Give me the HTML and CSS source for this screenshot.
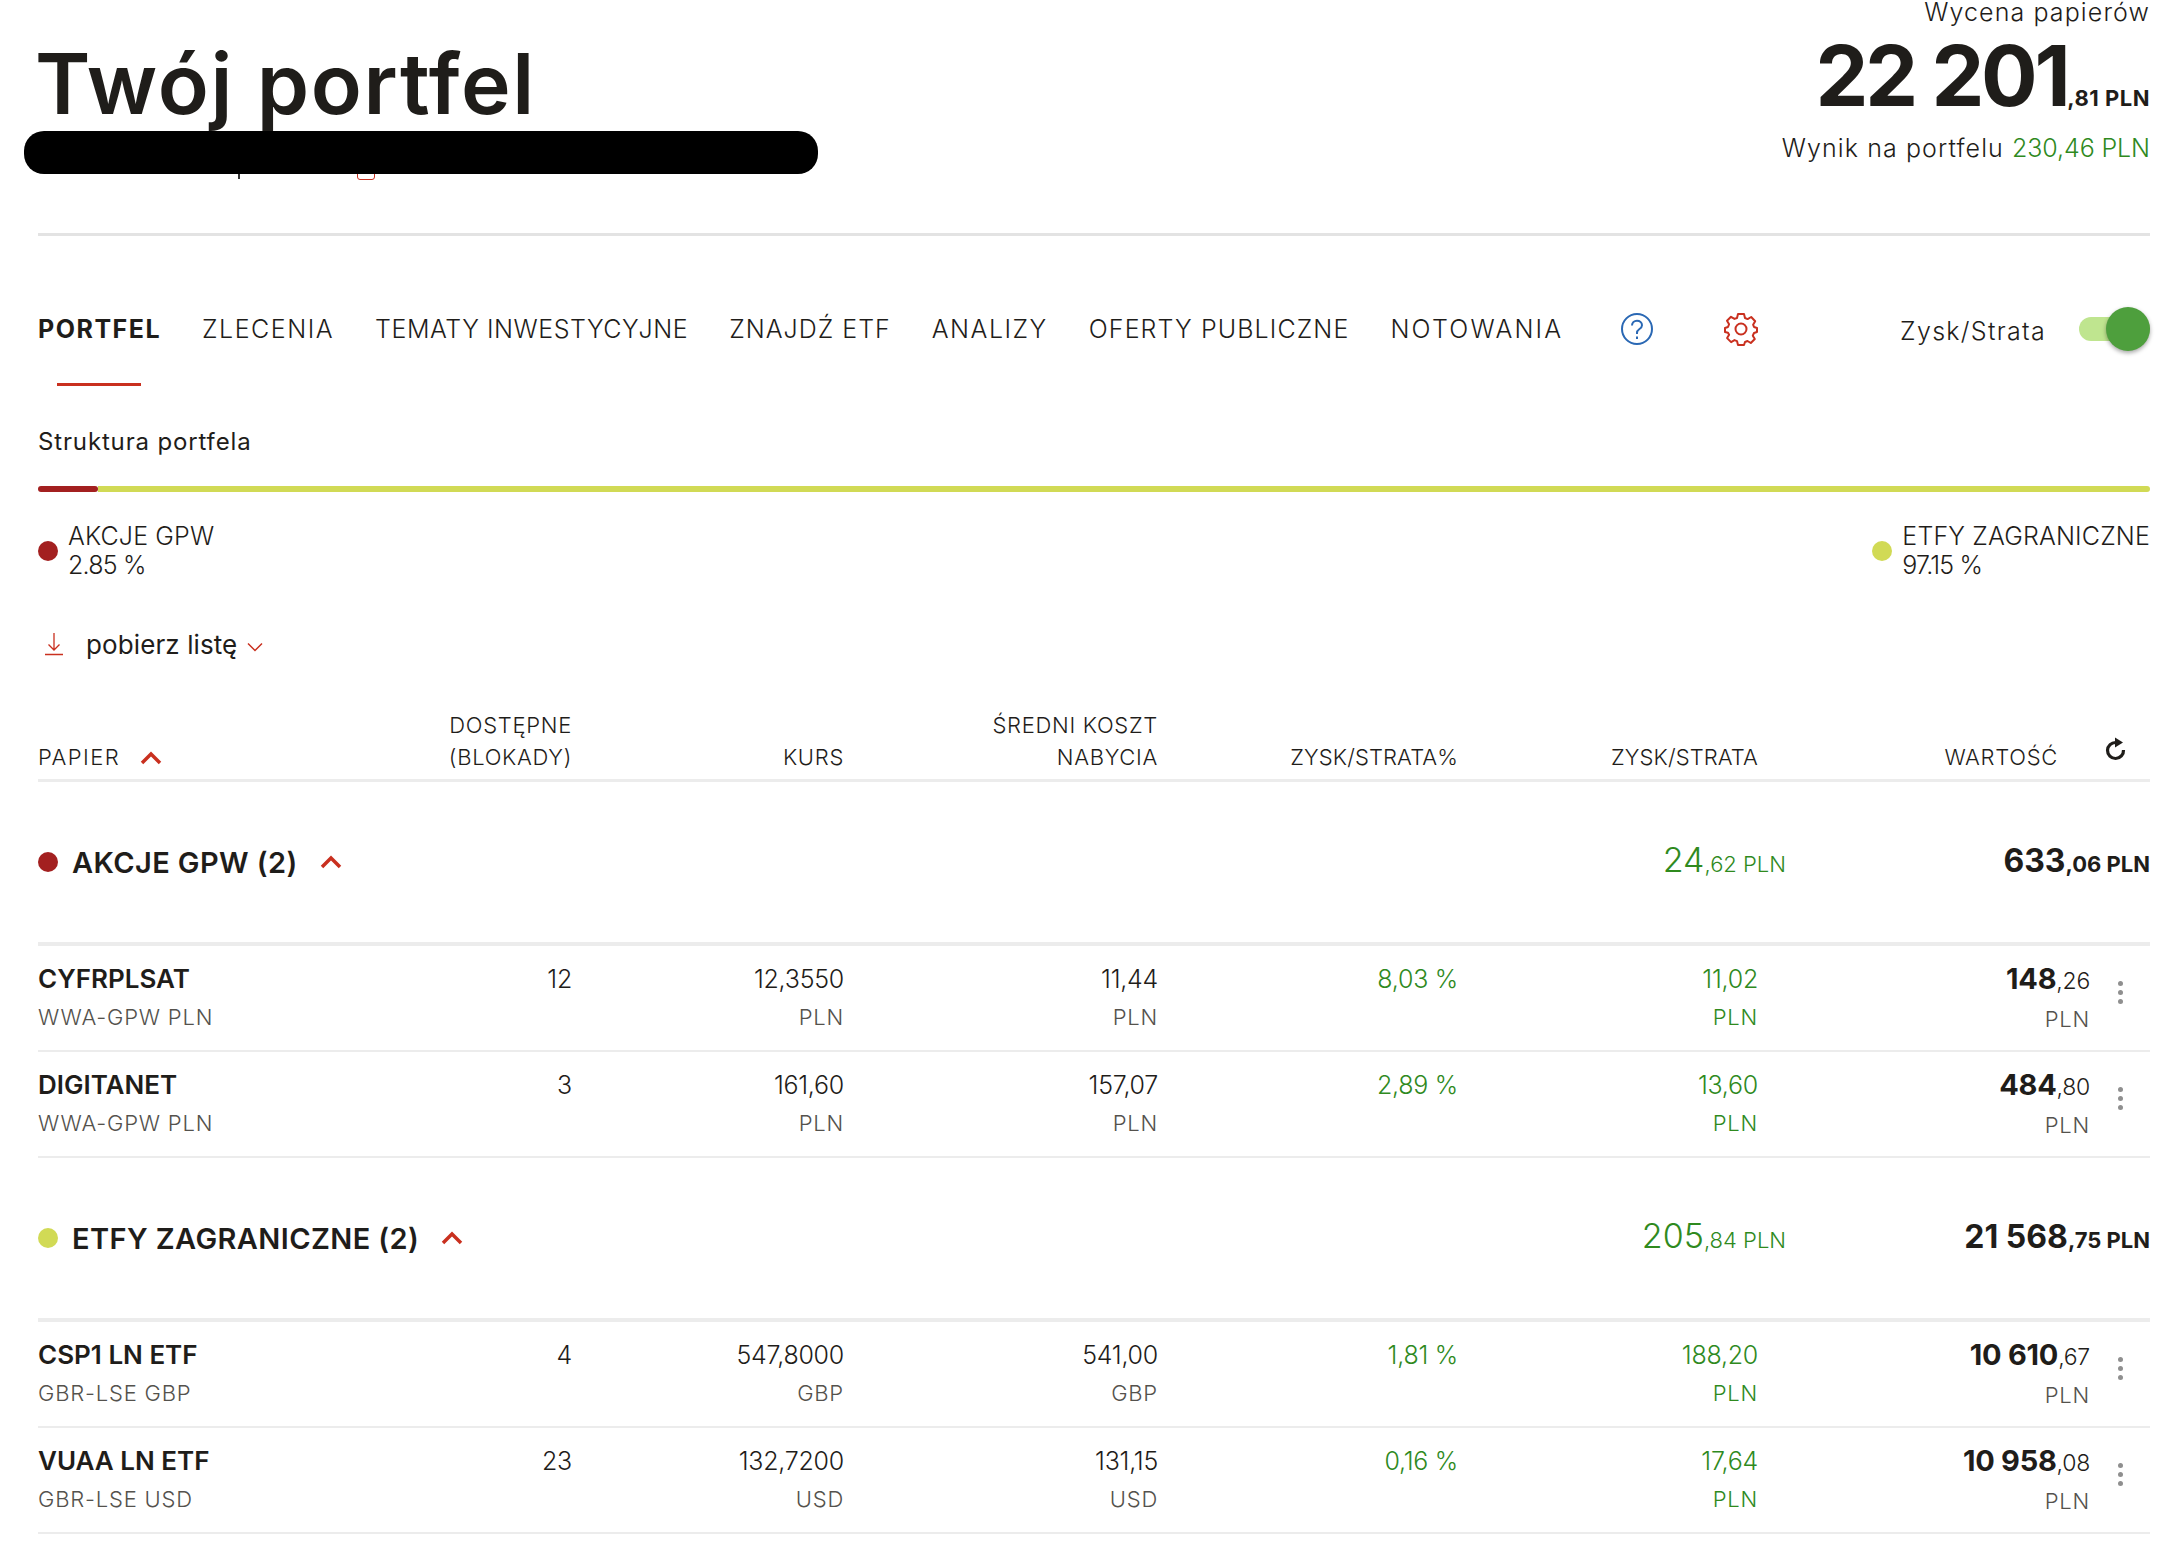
FILE: index.html
```html
<!DOCTYPE html>
<html lang="pl">
  <head>
    <meta charset="UTF-8" />
    <title>Twój portfel</title>
    <link rel="stylesheet" href="styles.css">
  </head>
  <body>
    <header class="top">
      <div class="top-left">
        <h1>Twój portfel</h1>
      </div>
      <div class="top-right">
        <div class="top-label">Wycena papierów</div>
        <div class="top-sum">22 201<small>,81 PLN</small></div>
        <div class="top-result">Wynik na portfelu <span class="green">230,46 PLN</span></div>
      </div>
      <!-- zamazany fragment -->
      <i class="bit-line"></i>
      <i class="bit-icon"></i>
      <div class="redacted"></div>
    </header>

    <nav class="tabs">
      <a class="tab active">PORTFEL</a>
      <a class="tab tab-orders">ZLECENIA</a>
      <a class="tab tab-themes">TEMATY INWESTYCYJNE</a>
      <a class="tab tab-etf">ZNAJDŹ ETF</a>
      <a class="tab tab-an">ANALIZY</a>
      <a class="tab tab-ipo">OFERTY PUBLICZNE</a>
      <a class="tab tab-quotes">NOTOWANIA</a>
      <svg class="ico-help" width="34" height="34" viewBox="0 0 34 34" fill="none" stroke="#2a68b4" stroke-width="2">
        <circle cx="17" cy="17" r="15"/>
        <path d="M12 13.5c0-3 2.300-4.800 5-4.800s5 1.800 5 4.500c0 2-1.200 3-2.800 4.100-1.500 1-2.200 1.900-2.200 3.700v1"/>
        <path d="M17 24.500v2.500"/>
      </svg>
      <svg class="ico-gear" width="34" height="34" viewBox="0 0 34 34" fill="none" stroke="#c9301f" stroke-width="2" stroke-linejoin="round">
        <circle cx="17" cy="17" r="5.500"/>
        <path d="M14 2h6l1 4 2.600 1.100 3.600-2.100 4 4.200-2.100 3.500L30 15l3 1v4l-3 1-1.200 2.700 2 3.300-4 4-3.300-2-2.500 1L20 33h-6l-1-3.900-2.500-1-3.400 2-4-4 2-3.400L4 20.700 1 20v-4l3-1 1.100-2.800L3 8.700l4-3.900 3.500 2.100L13 6z"/>
      </svg>
      <span class="switch-label">Zysk/Strata</span>
      <span class="switch"><span class="knob"></span></span>
    </nav>

    <section class="structure">
      <div class="structure-title">Struktura portfela</div>
      <div class="bar">
        <div class="bar-red"></div>
        <div class="bar-lime"></div>
      </div>
      <div class="legend">
        <div class="legend-item">
          <span class="dot dot-red"></span>
          <div>AKCJE GPW<br><span class="pct">2.85 %</span></div>
        </div>
        <div class="legend-item">
          <span class="dot dot-lime"></span>
          <div>ETFY ZAGRANICZNE<br><span class="pct">97.15 %</span></div>
        </div>
      </div>
    </section>

    <div class="download">
      <svg width="20" height="24" viewBox="0 0 20 24" fill="none" stroke="#c9301f" stroke-width="1.300">
        <path d="M10 1v17M4.500 12.500 10 18l5.500-5.500M1 22.500h18"/>
      </svg>
      <span>pobierz listę</span>
      <svg class="chev-down" width="16" height="10" viewBox="0 0 16 10" fill="none" stroke="#c9301f" stroke-width="1.500">
        <path d="M1 1.500 8 8.500l7-7"/>
      </svg>
    </div>

    <div class="grid head">
      <div class="cell-left head-first">PAPIER
        <svg class="chev-up" width="22" height="14" viewBox="0 0 22 14" fill="none" stroke="#c9301f" stroke-width="3.500">
          <path d="M2 12 11 3l9 9"/>
        </svg>
      </div>
      <div>DOSTĘPNE<br>(BLOKADY)</div>
      <div>KURS</div>
      <div>ŚREDNI KOSZT<br>NABYCIA</div>
      <div class="head-tight">ZYSK/STRATA%</div>
      <div class="head-tight">ZYSK/STRATA</div>
      <div class="head-value">WARTOŚĆ</div>
      <svg class="ico-refresh" width="24" height="24" viewBox="0 0 24 24" fill="none" stroke="#1f1d1a" stroke-width="3.200">
        <path d="M13 5.500a8 8 0 1 0 7.500 7.500"/>
        <path d="M12 0.500l8 5-8 5z" fill="#1f1d1a" stroke="none"/>
      </svg>
    </div>

    <div class="group">
      <div class="group-name">
        <span class="dot dot-red"></span>AKCJE GPW (2)
        <svg class="chev-up" width="22" height="14" viewBox="0 0 22 14" fill="none" stroke="#c9301f" stroke-width="3.500">
          <path d="M2 12 11 3l9 9"/>
        </svg>
      </div>
      <div class="group-gain green">24<small>,62 PLN</small></div>
      <div class="group-value">633<small>,06 PLN</small></div>
    </div>
    <div class="grid row">
      <div class="cell-left"><b>CYFRPLSAT</b><em>WWA-GPW PLN</em></div>
      <div>12</div>
      <div>12,3550<em>PLN</em></div>
      <div>11,44<em>PLN</em></div>
      <div class="green">8,03 %</div>
      <div class="green">11,02<em>PLN</em></div>
      <div><span class="val"><b>148</b>,26</span><em>PLN</em></div>
      <div class="more"><i></i><i></i><i></i></div>
    </div>
    <div class="grid row">
      <div class="cell-left"><b>DIGITANET</b><em>WWA-GPW PLN</em></div>
      <div>3</div>
      <div>161,60<em>PLN</em></div>
      <div>157,07<em>PLN</em></div>
      <div class="green">2,89 %</div>
      <div class="green">13,60<em>PLN</em></div>
      <div><span class="val"><b>484</b>,80</span><em>PLN</em></div>
      <div class="more"><i></i><i></i><i></i></div>
    </div>

    <div class="group">
      <div class="group-name">
        <span class="dot dot-lime"></span>ETFY ZAGRANICZNE (2)
        <svg class="chev-up" width="22" height="14" viewBox="0 0 22 14" fill="none" stroke="#c9301f" stroke-width="3.500">
          <path d="M2 12 11 3l9 9"/>
        </svg>
      </div>
      <div class="group-gain green">205<small>,84 PLN</small></div>
      <div class="group-value">21 568<small>,75 PLN</small></div>
    </div>
    <div class="grid row">
      <div class="cell-left"><b>CSP1 LN ETF</b><em>GBR-LSE GBP</em></div>
      <div>4</div>
      <div>547,8000<em>GBP</em></div>
      <div>541,00<em>GBP</em></div>
      <div class="green">1,81 %</div>
      <div class="green">188,20<em>PLN</em></div>
      <div><span class="val"><b>10 610</b>,67</span><em>PLN</em></div>
      <div class="more"><i></i><i></i><i></i></div>
    </div>
    <div class="grid row">
      <div class="cell-left"><b>VUAA LN ETF</b><em>GBR-LSE USD</em></div>
      <div>23</div>
      <div>132,7200<em>USD</em></div>
      <div>131,15<em>USD</em></div>
      <div class="green">0,16 %</div>
      <div class="green">17,64<em>PLN</em></div>
      <div><span class="val"><b>10 958</b>,08</span><em>PLN</em></div>
      <div class="more"><i></i><i></i><i></i></div>
    </div>
  </body>
</html>
```

FILE: styles.css
```css
html {
  margin: 0;
  padding: 0;
}

body {
  margin: 0;
  padding: 0 34px 30px 38px;
  background: white;
  color: #1f1d1a;
  font-family: "Inter", "Liberation Sans", sans-serif;
  font-weight: 300;
  font-size: 24px;
}

.green {
  color: #2f8a1e;
}

/* top */
.top {
  display: flex;
  justify-content: space-between;
  height: 233px;
  border-bottom: 3px solid #e3e3e3;
  position: relative;
}

h1 {
  margin: 36px 0 0 -3px;
  font-size: 84px;
  line-height: 96px;
  font-weight: 600;
  letter-spacing: 1.6px;
}

.top-right {
  text-align: right;
}

.top-label {
  font-size: 25px;
  line-height: 24px;
  letter-spacing: 1.1px;
}

.top-sum {
  margin-top: 18px;
  font-size: 84px;
  line-height: 68px;
  font-weight: 700;
  letter-spacing: -3.3px;
}

.top-sum small {
  font-size: 22px;
  letter-spacing: 0.5px;
}

.top-result {
  margin-top: 1px;
  line-height: 30px;
  font-size: 25px;
  letter-spacing: 1.1px;
}

.top-result .green {
  letter-spacing: -0.1px;
}

.redacted {
  position: absolute;
  left: -14px;
  top: 131px;
  width: 794px;
  height: 43px;
  background: black;
  border-radius: 20px;
}

.bit-line {
  position: absolute;
  left: 200px;
  top: 170px;
  width: 2px;
  height: 9px;
  background: #333;
}

.bit-icon {
  position: absolute;
  left: 319px;
  top: 165px;
  width: 16px;
  height: 13px;
  border: 1.500px solid #c9301f;
  border-radius: 3px;
}

/* tabs */
.tabs {
  display: flex;
  align-items: center;
  height: 94px;
  margin-top: 46px;
  position: relative;
  font-size: 25px;
  letter-spacing: 0.5px;
}

.tab {
  white-space: nowrap;
  margin-right: 41px;
}

.tab.active {
  font-weight: 700;
  letter-spacing: 1.5px;
  position: relative;
}

.tab.active::after {
  content: "";
  position: absolute;
  left: 19px;
  width: 84px;
  top: 69px;
  height: 3px;
  background: #c9301f;
}

.tab-orders {
  letter-spacing: 1.5px;
}

.tab-themes {
  letter-spacing: 0.55px;
}

.tab-etf {
  letter-spacing: 1px;
}

.tab-an {
  letter-spacing: 1.5px;
}

.tab-ipo {
  letter-spacing: 1.1px;
}

.tab-quotes {
  letter-spacing: 2.2px;
}

.ico-help {
  margin-left: 16px;
}

.ico-gear {
  margin-left: 70px;
}

.switch-label {
  margin-left: auto;
  margin-right: 33px;
  padding-top: 3px;
  letter-spacing: 1.3px;
}

.switch {
  display: block;
  width: 71px;
  height: 24px;
  border-radius: 12px;
  background: #bfe58f;
  position: relative;
}

.knob {
  position: absolute;
  right: 0;
  top: -10px;
  width: 44px;
  height: 44px;
  border-radius: 50%;
  background: #4e9f3d;
  box-shadow: 0 2px 4px rgba(0, 0, 0, 0.35);
}

/* struktura */
.structure {
  margin-top: 51px;
}

.structure-title {
  line-height: 30px;
  font-weight: 400;
  letter-spacing: 0.85px;
}

.bar {
  display: flex;
  height: 6px;
  margin-top: 29px;
}

.bar-red {
  width: 60px;
  background: #a32020;
  border-radius: 3px;
}

.bar-lime {
  flex: 1;
  background: #d1da55;
  border-radius: 0 3px 3px 0;
}

.legend {
  display: flex;
  justify-content: space-between;
  margin-top: 30px;
  line-height: 29px;
  font-size: 25px;
  letter-spacing: 0.15px;
}

.legend-item {
  display: flex;
  align-items: center;
  gap: 10px;
}

.pct {
  letter-spacing: -0.8px;
}

.dot {
  display: inline-block;
  width: 20px;
  height: 20px;
  border-radius: 50%;
  flex-shrink: 0;
}

.dot-red {
  background: #a32020;
}

.dot-lime {
  background: #d1da55;
}

/* pobierz */
.download {
  display: flex;
  align-items: center;
  margin-top: 47px;
  padding-left: 6px;
  height: 34px;
  font-size: 26px;
  font-weight: 400;
  letter-spacing: 0.1px;
}

.download span {
  margin-left: 22px;
}

.chev-down {
  margin-left: 10px;
  margin-top: 5px;
}

/* tabela */
.grid {
  display: grid;
  grid-template-columns: 267px 267px 272px 314px 300px 300px 332px 60px;
  text-align: right;
}

.cell-left {
  text-align: left;
}

.head {
  align-items: end;
  margin-top: 48px;
  padding-bottom: 6px;
  border-bottom: 3px solid #ececec;
  font-size: 22px;
  line-height: 32px;
  letter-spacing: 0.7px;
}

.head-first {
  letter-spacing: 1.4px;
}

.head-first .chev-up {
  margin-left: 12px;
}

.head-tight {
  letter-spacing: 0.1px;
}

.head-value {
  padding-right: 32px;
}

.chev-up {
  margin-left: 16px;
}

.ico-refresh {
  justify-self: end;
  margin-right: 23px;
  margin-bottom: 12px;
}

.group {
  display: grid;
  grid-template-columns: 1720px 392px;
  align-items: center;
  height: 160px;
  position: relative;
  border-bottom: 4px solid #ececec;
}

.group-name {
  display: flex;
  align-items: center;
  font-size: 29px;
  font-weight: 600;
  letter-spacing: 0.4px;
}

.group-name .dot {
  margin-right: 14px;
}

.group-name .chev-up {
  margin-left: 22px;
}

.group-gain {
  position: absolute;
  right: 364px;
  margin-top: -5px;
  font-size: 34px;
  font-weight: 300;
}

.group-gain small {
  font-size: 22px;
}

.group-value {
  grid-column: 2;
  text-align: right;
  margin-top: -4px;
  font-size: 32px;
  font-weight: 700;
}

.group-value small {
  font-size: 22px;
}

.row {
  height: 104px;
  border-bottom: 2px solid #ececec;
  font-size: 25px;
  line-height: 34px;
  letter-spacing: -0.25px;
  align-content: start;
}

.row > div {
  padding-top: 16px;
}

.row b {
  font-weight: 700;
}

.row .val b {
  font-size: 29px;
}

.row .val {
  font-size: 23px;
}

.row em {
  display: block;
  font-style: normal;
  font-size: 22px;
  line-height: 28px;
  margin-top: 7px;
  letter-spacing: 0.8px;
  color: #54524d;
}

.row .green em {
  color: #2f8a1e;
}

.cell-left b {
  font-size: 26px;
  font-weight: 600;
  letter-spacing: 0;
}

.more {
  display: flex;
  flex-direction: column;
  align-items: flex-end;
  gap: 4px;
  margin-right: 27px;
  padding-top: 35px !important;
}

.more i {
  width: 5px;
  height: 5px;
  border-radius: 50%;
  background: #8f8f8f;
}
```
